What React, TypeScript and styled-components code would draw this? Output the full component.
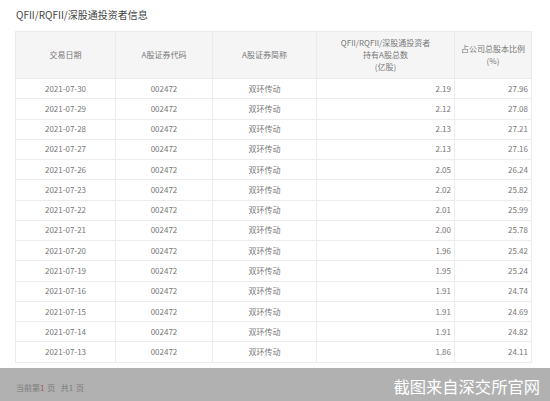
import React from "react";
import styled, { createGlobalStyle } from "styled-components";

const Global = createGlobalStyle`
  html, body { margin: 0; padding: 0; background: #fff; }
  body { font-family: "Noto Sans CJK SC", "Noto Sans", sans-serif; }
`;

const Page = styled.div`
  width: 550px;
  height: 401px;
  display: flex;
  flex-direction: column;
  overflow: hidden;
`;

const Main = styled.div`
  padding: 7px 0 0 15px;
  height: 361px;
  box-sizing: border-box;
`;

const Title = styled.div`
  font-size: 10px;
  line-height: 16px;
  color: #444;
  padding-left: 1px;
  margin-bottom: 8px;
`;

const Table = styled.table`
  border-collapse: collapse;
  table-layout: fixed;
  width: 516px;
  font-size: 8px;
  color: #777;
`;

const Col = styled.col<{ w: number }>`
  width: ${(p) => p.w}px;
`;

const Th = styled.th`
  height: 46px;
  padding: 0 2px;
  background: #f5f5f5;
  border: 1px solid #ebebeb;
  font-weight: normal;
  line-height: 12px;
  text-align: center;
  vertical-align: middle;
`;

const Row = styled.tr`
  height: 20.28px;
`;

const Td = styled.td<{ right?: boolean }>`
  padding: 0 3px;
  border: 1px solid #ececec;
  text-align: ${(p) => (p.right ? "right" : "center")};
  line-height: 12px;
  vertical-align: middle;
  white-space: nowrap;
  overflow: hidden;
`;

const Footer = styled.div`
  flex: 1;
  background: #b1b1b1;
  display: flex;
  align-items: center;
  justify-content: space-between;
  padding: 0 10px 0 16px;
  margin-top: 7px;
`;

const Pager = styled.div`
  font-size: 8px;
  color: #7a7a7a;
  padding-top: 6px;
  word-spacing: 1px;
`;

const Cur = styled.span`
  color: #a35a5a;
`;

const Mark = styled.div`
  font-size: 16.3px;
  color: #fff;
  padding-top: 2px;
`;

const rows: [string, string, string][] = [
  ["2021-07-30", "2.19", "27.96"],
  ["2021-07-29", "2.12", "27.08"],
  ["2021-07-28", "2.13", "27.21"],
  ["2021-07-27", "2.13", "27.16"],
  ["2021-07-26", "2.05", "26.24"],
  ["2021-07-23", "2.02", "25.82"],
  ["2021-07-22", "2.01", "25.99"],
  ["2021-07-21", "2.00", "25.78"],
  ["2021-07-20", "1.96", "25.42"],
  ["2021-07-19", "1.95", "25.24"],
  ["2021-07-16", "1.91", "24.74"],
  ["2021-07-15", "1.91", "24.69"],
  ["2021-07-14", "1.91", "24.82"],
  ["2021-07-13", "1.86", "24.11"],
];

export default function App() {
  return (
    <Page>
      <Global />
      <Main>
        <Title>QFII/RQFII/深股通投资者信息</Title>
        <Table>
          <colgroup>
            <Col w={100} />
            <Col w={97} />
            <Col w={104} />
            <Col w={138} />
            <Col w={77} />
          </colgroup>
          <thead>
            <tr>
              <Th>交易日期</Th>
              <Th>A股证券代码</Th>
              <Th>A股证券简称</Th>
              <Th>
                QFII/RQFII/深股通投资者
                <br />
                持有A股总数
                <br />
                (亿股)
              </Th>
              <Th>
                占公司总股本比例
                <br />
                (%)
              </Th>
            </tr>
          </thead>
          <tbody>
            {rows.map(([d, a, b]) => (
              <Row key={d}>
                <Td>{d}</Td>
                <Td>002472</Td>
                <Td>双环传动</Td>
                <Td right>{a}</Td>
                <Td right>{b}</Td>
              </Row>
            ))}
          </tbody>
        </Table>
      </Main>
      <Footer>
        <Pager>
          当前第<Cur>1</Cur> 页&nbsp; 共1 页
        </Pager>
        <Mark>截图来自深交所官网</Mark>
      </Footer>
    </Page>
  );
}
